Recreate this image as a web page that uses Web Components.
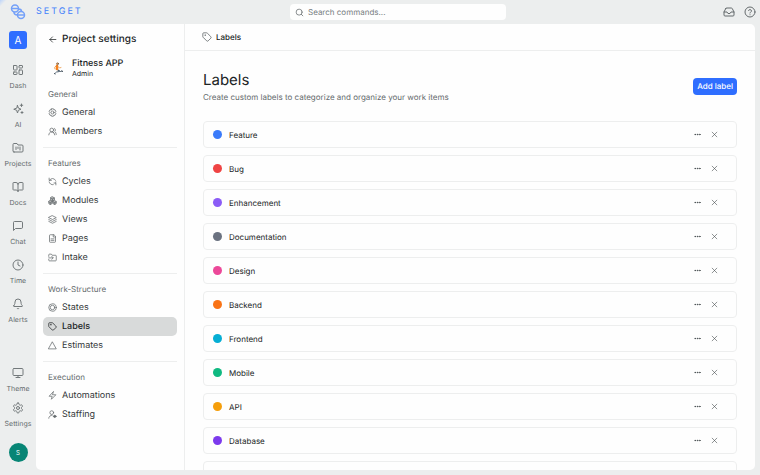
<!DOCTYPE html>
<html lang="en">
<head>
<meta charset="utf-8">
<meta name="viewport" content="width=device-width, initial-scale=1">
<title>Setget - Labels</title>
<style>
  :root {
    --canvas: #eceeee;
    --surface: #fefefe;
    --line: #edeeee;
    --text: #202425;
    --text-nav: #343839;
    --text-muted: #656b6d;
    --icon: #73797b;
    --accent: #2f6eff;
  }
  body {
    margin: 0;
    background: linear-gradient(135deg, #bcd4fa 0, var(--canvas) 5px);
    color: var(--text);
    font: 8px/12px Inter, "Liberation Sans", sans-serif;
    text-rendering: geometricPrecision;
  }
</style>
</head>
<body>
<sg-app>
  <sg-topbar slot="top"></sg-topbar>

  <sg-rail slot="rail">
    <sg-rail-item icon="dash">Dash</sg-rail-item>
    <sg-rail-item icon="sparkles">AI</sg-rail-item>
    <sg-rail-item icon="projects">Projects</sg-rail-item>
    <sg-rail-item icon="book">Docs</sg-rail-item>
    <sg-rail-item icon="chat">Chat</sg-rail-item>
    <sg-rail-item icon="clock">Time</sg-rail-item>
    <sg-rail-item icon="bell">Alerts</sg-rail-item>
    <sg-rail-item slot="foot" icon="monitor">Theme</sg-rail-item>
    <sg-rail-item slot="foot" icon="gear">Settings</sg-rail-item>
  </sg-rail>

  <sg-sidebar slot="sidebar">
    <sg-nav-group heading="General">
      <sg-nav-item icon="hexgear">General</sg-nav-item>
      <sg-nav-item icon="users">Members</sg-nav-item>
    </sg-nav-group>
    <sg-nav-group heading="Features">
      <sg-nav-item icon="cycle">Cycles</sg-nav-item>
      <sg-nav-item icon="modules">Modules</sg-nav-item>
      <sg-nav-item icon="layers">Views</sg-nav-item>
      <sg-nav-item icon="page">Pages</sg-nav-item>
      <sg-nav-item icon="intake">Intake</sg-nav-item>
    </sg-nav-group>
    <sg-nav-group heading="Work-Structure">
      <sg-nav-item icon="states">States</sg-nav-item>
      <sg-nav-item icon="tag" current>Labels</sg-nav-item>
      <sg-nav-item icon="triangle">Estimates</sg-nav-item>
    </sg-nav-group>
    <sg-nav-group heading="Execution">
      <sg-nav-item icon="zap">Automations</sg-nav-item>
      <sg-nav-item icon="staff">Staffing</sg-nav-item>
    </sg-nav-group>
  </sg-sidebar>

  <sg-labels-page>
    <sg-label-row color="#3b7bfa">Feature</sg-label-row>
    <sg-label-row color="#ef4444">Bug</sg-label-row>
    <sg-label-row color="#8b5cf6">Enhancement</sg-label-row>
    <sg-label-row color="#6b7280">Documentation</sg-label-row>
    <sg-label-row color="#ec4899">Design</sg-label-row>
    <sg-label-row color="#f97316">Backend</sg-label-row>
    <sg-label-row color="#06aed4">Frontend</sg-label-row>
    <sg-label-row color="#10b981">Mobile</sg-label-row>
    <sg-label-row color="#f59e0b">API</sg-label-row>
    <sg-label-row color="#7c3aed">Database</sg-label-row>
    <sg-label-row></sg-label-row>
  </sg-labels-page>
</sg-app>

<script>
// 24x24 outline icons
const ICONS = {
  dash: '<rect x="3" y="3" width="7" height="9" rx="1"/><rect x="14" y="3" width="7" height="5" rx="1"/><rect x="14" y="12" width="7" height="9" rx="1"/><rect x="3" y="16" width="7" height="5" rx="1"/>',
  sparkles: '<path d="M11 5l1.8 5.2L18 12.5l-5.2 1.9L11 20l-1.8-5.6L3.500 12.500l5.700-2.300z"/><path d="M19 2v5M16.500 4.500h5M20 17v4M18 19h4"/>',
  projects: '<path d="M4 20h16a2 2 0 0 0 2-2V8a2 2 0 0 0-2-2h-8l-2-3H4a2 2 0 0 0-2 2v13a2 2 0 0 0 2 2z"/><path d="M8 10v5M12 10v3M16 10v6"/>',
  book: '<path d="M12 7v14M3 18a1 1 0 0 1-1-1V4a1 1 0 0 1 1-1h5a4 4 0 0 1 4 4 4 4 0 0 1 4-4h5a1 1 0 0 1 1 1v13a1 1 0 0 1-1 1h-6a3 3 0 0 0-3 3 3 3 0 0 0-3-3z"/>',
  chat: '<path d="M21 15a2 2 0 0 1-2 2H7l-4 4V5a2 2 0 0 1 2-2h14a2 2 0 0 1 2 2z"/>',
  clock: '<circle cx="12" cy="12" r="10"/><path d="M12 6v6l4 2"/>',
  bell: '<path d="M10.300 21a2 2 0 0 0 3.400 0M3.300 15.300A1 1 0 0 0 4 17h16a1 1 0 0 0 .7-1.700C19.400 14 18 12.500 18 8A6 6 0 0 0 6 8c0 4.500-1.400 6-2.700 7.300z"/>',
  monitor: '<rect x="2" y="3" width="20" height="14" rx="2"/><path d="M8 21h8M12 17v4"/>',
  gear: '<path d="M12.200 2h-.4a2 2 0 0 0-2 2v.2a2 2 0 0 1-1 1.700l-.4.3a2 2 0 0 1-2 0l-.2-.1a2 2 0 0 0-2.700.7l-.2.4a2 2 0 0 0 .7 2.700l.2.1a2 2 0 0 1 1 1.700v.5a2 2 0 0 1-1 1.800l-.2.1a2 2 0 0 0-.7 2.700l.2.4a2 2 0 0 0 2.700.7l.2-.1a2 2 0 0 1 2 0l.4.300a2 2 0 0 1 1 1.700v.2a2 2 0 0 0 2 2h.4a2 2 0 0 0 2-2v-.2a2 2 0 0 1 1-1.700l.4-.3a2 2 0 0 1 2 0l.2.1a2 2 0 0 0 2.700-.7l.2-.4a2 2 0 0 0-.7-2.700l-.2-.1a2 2 0 0 1-1-1.700v-.5a2 2 0 0 1 1-1.800l.2-.1a2 2 0 0 0 .7-2.700l-.2-.4a2 2 0 0 0-2.700-.7l-.2.1a2 2 0 0 1-2 0l-.4-.300a2 2 0 0 1-1-1.700V4a2 2 0 0 0-2-2z"/><circle cx="12" cy="12" r="3"/>',
  hexgear: '<path d="M9.500 2h5l1 3 3-.5 2.500 4.500-2 3 2 3-2.500 4.500-3-.5-1 3h-5l-1-3-3 .5L3 15l2-3-2-3 2.500-4.500 3 .5z"/><circle cx="12" cy="12" r="4"/>',
  users: '<path d="M2 21a8 8 0 0 1 13.300-6M22 20c0-3.400-2-6.500-4-8a5 5 0 0 0-.5-8.300"/><circle cx="10" cy="8" r="5"/><path d="M18 21a8 8 0 0 0-5-7.400"/>',
  cycle: '<path d="M3 3v6h6M4 9a9 9 0 0 1 16 0M21 13a9 9 0 0 1-1 3M21 21v-5h-5M3 13a9 9 0 0 0 11 7.500"/>',
  modules: '<g fill="currentColor" fill-opacity=".45"><path d="M12 2l5 3v6l-5 3-5-3V5z"/><path d="M6 12l5 3v5l-5 3-4-3v-5z"/><path d="M18 12l4 3v5l-4 3-5-3v-5z"/></g><path d="M7 5l5 3 5-3M12 8v5M2 15l4 3 5-3M13 15l5 3 4-3M6 18v4M18 18v4"/>',
  layers: '<path d="M12 2l10 5-10 5L2 7z"/><path d="M2 12l10 5 10-5M2 17l10 5 10-5"/>',
  page: '<path d="M15 2H6a2 2 0 0 0-2 2v16a2 2 0 0 0 2 2h12a2 2 0 0 0 2-2V7zM14 2v6h6M8 13h8M8 17h8"/>',
  intake: '<path d="M2 9V5a2 2 0 0 1 2-2h5l2 3h9a2 2 0 0 1 2 2v11a2 2 0 0 1-2 2H4a2 2 0 0 1-2-2v-2M2 13h11M10 9l4 4-4 4"/>',
  states: '<circle cx="12" cy="12" r="10"/><circle cx="12" cy="12" r="6"/>',
  tag: '<path d="M12.600 2.600A2 2 0 0 0 11.200 2H4a2 2 0 0 0-2 2v7.200a2 2 0 0 0 .6 1.400l8.700 8.700a2.400 2.400 0 0 0 3.400 0l6.600-6.600a2.400 2.400 0 0 0 0-3.400z"/><circle cx="7.500" cy="7.500" r=".5" fill="currentColor"/>',
  triangle: '<path d="M12 3l10 18H2z"/>',
  zap: '<path d="M14 2L3 14h8l-2 8 12-12h-8z"/>',
  staff: '<circle cx="10" cy="7" r="5"/><path d="M2 22a8 8 0 0 1 9-8"/><circle cx="18" cy="17" r="3" fill="currentColor"/><path d="M14 17h8"/>',
  back: '<path d="M12 19l-7-7 7-7M21 12H5"/>',
  search: '<circle cx="11" cy="11" r="8"/><path d="M21 21l-4.300-4.300"/>',
  inbox: '<path d="M22 12h-6l-2 3h-4l-2-3H2"/><path d="M5.500 5.100L2 12v6a2 2 0 0 0 2 2h16a2 2 0 0 0 2-2v-6l-3.500-6.900A2 2 0 0 0 16.800 4H7.200a2 2 0 0 0-1.700 1.100z"/>',
  help: '<circle cx="12" cy="12" r="10"/><path d="M9.100 9a3 3 0 0 1 5.800 1c0 2-3 2.500-3 4M12 17.500v.1"/>',
  more: '<g fill="currentColor"><circle cx="4" cy="12" r="1.500"/><circle cx="12" cy="12" r="1.500"/><circle cx="20" cy="12" r="1.500"/></g>',
  close: '<path d="M20 4L4 20M4 4l16 16"/>'
};

/** Base class: opens the shadow root and fills it with render(). */
class SgElement extends HTMLElement {
  constructor () {
    super();
    this.attachShadow({mode: 'open'});
  }
  connectedCallback () {
    this.shadowRoot.innerHTML = this.render();
  }
}

class SgIcon extends SgElement {
  render () {
    return `
      <style>
        :host { display: block; flex: none; width: var(--icon-size, 9px); height: var(--icon-size, 9px); }
        svg { display: block; width: 100%; height: 100%; }
      </style>
      <svg viewBox="0 0 24 24" fill="none" stroke="currentColor" stroke-width="2"
        stroke-linecap="round" stroke-linejoin="round" aria-hidden="true">${ICONS[this.getAttribute('name')]}</svg>`;
  }
}

class SgApp extends SgElement {
  render () {
    return `
      <style>
        :host {
          display: grid;
          box-sizing: border-box;
          height: 100vh;
          grid-template: 24px minmax(0, 1fr) / 36px minmax(0, 1fr);
          padding: 0 5px 5px 0;
        }
        ::slotted([slot="top"]) { grid-column: 1 / -1; }
        .panel {
          display: grid;
          grid-template-columns: 149px minmax(0, 1fr);
          background: var(--surface);
          border-radius: 5px;
          overflow: hidden;
        }
      </style>
      <slot name="top"></slot>
      <slot name="rail"></slot>
      <div class="panel">
        <slot name="sidebar"></slot>
        <slot></slot>
      </div>`;
  }
}

class SgTopbar extends SgElement {
  render () {
    return `
      <style>
        :host {
          display: grid;
          grid-template-columns: 36px minmax(0, 1fr) 216px minmax(0, 1fr);
          align-items: center;
          margin-right: -5px;
        }
        .mark { width: 16px; height: 16px; justify-self: center; }
        .brand { color: #4381fb; font-size: 9px; letter-spacing: 2px; }
        label {
          display: flex;
          align-items: center;
          gap: 4px;
          height: 16px;
          padding: 0 5px;
          border-radius: 4px;
          background: var(--surface);
          color: var(--text-muted);
        }
        input { flex: 1; min-width: 0; border: 0; padding: 0; outline: 0; background: none; font: inherit; color: var(--text); text-rendering: inherit; }
        input::placeholder { color: #777d7f; opacity: 1; }
        .actions { display: flex; justify-content: flex-end; gap: 9px; padding-right: 4px; --icon-size: 12px; }
        button { border: 0; padding: 0; background: none; color: var(--text-muted); }
      </style>
      <svg class="mark" viewBox="0 0 32 32" fill="none" stroke="#74a0f8" stroke-width="3" aria-hidden="true">
        <circle cx="10" cy="9" r="7"/><path d="M3 9h14"/>
        <circle cx="22" cy="22" r="7"/><path d="M15 22h14"/>
        <path d="M17 10c4 0 6 2 6 5M15 22c-4 0-7-2-7-6"/>
      </svg>
      <span class="brand">SETGET</span>
      <label>
        <sg-icon name="search"></sg-icon>
        <input type="search" placeholder="Search commands..." aria-label="Search commands">
      </label>
      <div class="actions">
        <button type="button" aria-label="Inbox"><sg-icon name="inbox"></sg-icon></button>
        <button type="button" aria-label="Help"><sg-icon name="help"></sg-icon></button>
      </div>`;
  }
}

class SgRail extends SgElement {
  render () {
    return `
      <style>
        :host { display: flex; flex-direction: column; align-items: center; padding-top: 7px; }
        button { border: 0; padding: 0; font: inherit; color: #fff; }
        .workspace { width: 18px; height: 18px; border-radius: 3px; background: var(--accent); font-size: 10px; }
        nav { display: grid; gap: 12px; margin-top: 15px; }
        .foot { display: grid; gap: 8px; margin-top: auto; }
        .avatar { width: 19px; height: 19px; margin: 14px 0 8px; border-radius: 50%; background: #078575; font-size: 6px; }
      </style>
      <button class="workspace" type="button">A</button>
      <nav aria-label="Main"><slot></slot></nav>
      <div class="foot"><slot name="foot"></slot></div>
      <button class="avatar" type="button">S</button>`;
  }
}

class SgRailItem extends SgElement {
  render () {
    return `
      <style>
        :host { display: block; --icon-size: 12px; }
        a {
          display: flex;
          flex-direction: column;
          align-items: center;
          gap: 5px;
          color: var(--text-muted);
          font-size: 7px;
          line-height: 10px;
          text-decoration: none;
        }
        sg-icon { color: var(--icon); }
      </style>
      <a href="#"><sg-icon name="${this.getAttribute('icon')}"></sg-icon><slot></slot></a>`;
  }
}

class SgSidebar extends SgElement {
  render () {
    return `
      <style>
        :host { display: block; padding: 7px 7px 0; border-right: 1px solid var(--line); }
        h2 { display: flex; align-items: center; gap: 5px; margin: 0; padding-left: 5px; font-size: 10px; line-height: 16px; font-weight: 500; }
        a { color: inherit; }
        .project { display: flex; align-items: center; gap: 8px; padding: 11px 8px 1px; }
        .project svg { width: 13px; height: 13px; }
        strong, small { display: block; font-size: 9px; line-height: 11px; font-weight: 500; }
        small { font-size: 7px; line-height: 9px; font-weight: 400; }
      </style>
      <h2><a href="#" aria-label="Back"><sg-icon name="back"></sg-icon></a>Project settings</h2>
      <div class="project">
        <svg viewBox="0 0 26 26" fill="none" stroke-linecap="round" stroke-linejoin="round" stroke-width="2" aria-hidden="true">
          <path d="M12 15l5 4-6 1-3 3" stroke="#536574"/>
          <path d="M13 15l6 4 3-1" stroke="#3d4d5b"/>
          <path d="M10 8l-3 3 1 3M14 9l3 3 3-1" stroke="#efac68"/>
          <path d="M12 8v6" stroke="#f58220" stroke-width="5"/>
          <circle cx="13" cy="3.500" r="2" fill="#e9a25f" stroke="#59402f" stroke-width="1"/>
          <path d="M7 23l1 1M22 18l1 1" stroke="#2c3944"/>
        </svg>
        <div><strong>Fitness APP</strong><small>Admin</small></div>
      </div>
      <nav aria-label="Project settings"><slot></slot></nav>`;
  }
}

class SgNavGroup extends SgElement {
  render () {
    return `
      <style>
        :host { display: block; padding-bottom: 6px; border-bottom: 1px solid var(--line); }
        :host(:last-child) { border-bottom: 0; }
        h3 { margin: 0; padding: 8px 5px 2px; font-size: 8px; line-height: 14px; font-weight: 400; color: var(--text-muted); }
      </style>
      <h3>${this.getAttribute('heading')}</h3>
      <slot></slot>`;
  }
}

class SgNavItem extends SgElement {
  render () {
    return `
      <style>
        :host { display: block; }
        a {
          display: flex;
          align-items: center;
          gap: 5px;
          padding: 0 5px;
          border-radius: 5px;
          color: var(--text-nav);
          font-size: 9px;
          line-height: 19px;
          text-decoration: none;
        }
        sg-icon { color: var(--text-muted); }
        :host([current]) a { background: #d8dada; color: var(--text); font-weight: 500; }
        :host([current]) sg-icon { color: inherit; }
      </style>
      <a href="#"><sg-icon name="${this.getAttribute('icon')}"></sg-icon><slot></slot></a>`;
  }
}

class SgLabelsPage extends SgElement {
  render () {
    return `
      <style>
        :host { display: flex; flex-direction: column; min-width: 0; min-height: 0; }
        header {
          display: flex;
          align-items: center;
          gap: 4px;
          height: 26px;
          padding: 0 17px;
          border-bottom: 1px solid var(--line);
          font-weight: 500;
        }
        header sg-icon { --icon-size: 10px; color: var(--text-muted); }
        main { flex: 1; min-height: 0; overflow: hidden; padding: 18px 18px 0; }
        .title { display: flex; align-items: center; justify-content: space-between; }
        h1 { margin: 0; font-size: 15px; line-height: 22px; font-weight: 400; }
        p { margin: 0; color: var(--text-muted); }
        button {
          height: 17px;
          padding: 0 4px;
          border: 0;
          border-radius: 4px;
          background: var(--accent);
          color: #fff;
          font: inherit;
          font-weight: 500;
          text-rendering: inherit;
        }
        .rows { display: grid; gap: 7px; margin-top: 18px; }
      </style>
      <header><sg-icon name="tag"></sg-icon>Labels</header>
      <main>
        <div class="title">
          <div>
            <h1>Labels</h1>
            <p>Create custom labels to categorize and organize your work items</p>
          </div>
          <button type="button">Add label</button>
        </div>
        <div class="rows"><slot></slot></div>
      </main>`;
  }
}

class SgLabelRow extends SgElement {
  render () {
    return `
      <style>
        :host {
          display: flex;
          align-items: center;
          box-sizing: border-box;
          height: 27px;
          padding: 0 18px 0 9px;
          border: 1px solid var(--line);
          border-radius: 4px;
        }
        .dot { width: 9px; height: 9px; margin-right: 7px; border-radius: 50%; background: ${this.getAttribute('color') || 'none'}; }
        .name { flex: 1; }
        button { border: 0; padding: 0; margin-left: 10px; background: none; color: #42484a; --icon-size: 7px; }
      </style>
      <span class="dot"></span>
      <span class="name"><slot></slot></span>
      <button type="button" aria-label="More"><sg-icon name="more"></sg-icon></button>
      <button type="button" aria-label="Delete"><sg-icon name="close"></sg-icon></button>`;
  }
}

customElements.define('sg-icon', SgIcon);
customElements.define('sg-app', SgApp);
customElements.define('sg-topbar', SgTopbar);
customElements.define('sg-rail', SgRail);
customElements.define('sg-rail-item', SgRailItem);
customElements.define('sg-sidebar', SgSidebar);
customElements.define('sg-nav-group', SgNavGroup);
customElements.define('sg-nav-item', SgNavItem);
customElements.define('sg-labels-page', SgLabelsPage);
customElements.define('sg-label-row', SgLabelRow);
</script>
</body>
</html>
